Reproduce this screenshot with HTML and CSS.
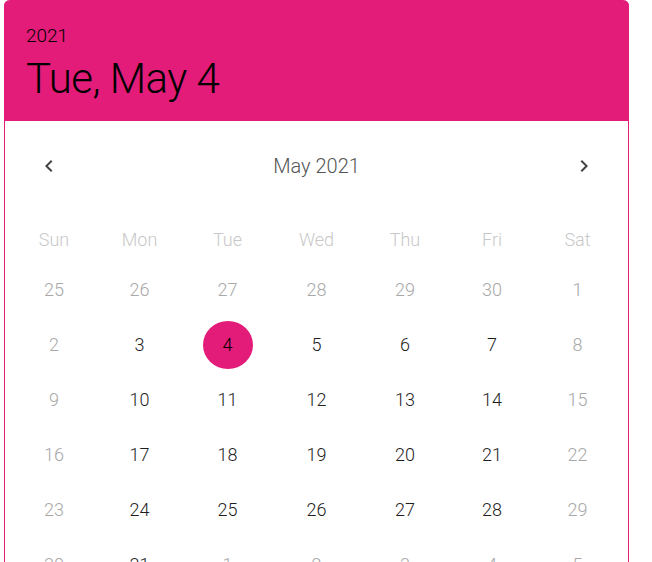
FILE: index.html
```html
<!DOCTYPE html>
<html lang="en">
<head>
    <meta charset="UTF-8">
    <meta name="viewport" content="width=device-width, initial-scale=1.0">
    <title>Date picker</title>
    <link rel="stylesheet" href="styles.css">
</head>
<body>
    <div class="picker">
        <div class="picker-header">
            <span class="picker-year">2021</span>
            <span class="picker-date">Tue, May 4</span>
        </div>

        <div class="month-nav">
            <button class="nav-btn" aria-label="Previous month">
                <svg viewBox="0 0 24 24" width="24" height="24"><path d="M15.41 7.41 14 6l-6 6 6 6 1.41-1.41L10.83 12z"/></svg>
            </button>
            <span class="month-label">May 2021</span>
            <button class="nav-btn" aria-label="Next month">
                <svg viewBox="0 0 24 24" width="24" height="24"><path d="M10 6 8.59 7.41 13.17 12l-4.58 4.59L10 18l6-6z"/></svg>
            </button>
        </div>

        <div class="week-row">
            <span>Sun</span><span>Mon</span><span>Tue</span><span>Wed</span><span>Thu</span><span>Fri</span><span>Sat</span>
        </div>

        <div class="days">
            <span class="day muted">25</span><span class="day muted">26</span><span class="day muted">27</span><span class="day muted">28</span><span class="day muted">29</span><span class="day muted">30</span><span class="day muted">1</span>
            <span class="day muted">2</span><span class="day">3</span><span class="day selected"><b>4</b></span><span class="day">5</span><span class="day">6</span><span class="day">7</span><span class="day muted">8</span>
            <span class="day muted">9</span><span class="day">10</span><span class="day">11</span><span class="day">12</span><span class="day">13</span><span class="day">14</span><span class="day muted">15</span>
            <span class="day muted">16</span><span class="day">17</span><span class="day">18</span><span class="day">19</span><span class="day">20</span><span class="day">21</span><span class="day muted">22</span>
            <span class="day muted">23</span><span class="day">24</span><span class="day">25</span><span class="day">26</span><span class="day">27</span><span class="day">28</span><span class="day muted">29</span>
            <span class="day muted">30</span><span class="day">31</span><span class="day muted">1</span><span class="day muted">2</span><span class="day muted">3</span><span class="day muted">4</span><span class="day muted">5</span>
        </div>
    </div>
</body>
</html>
```

FILE: styles.css
```css
* {
    box-sizing: border-box;
}

body {
    margin: 0;
    padding: 0 0 0 4px;
    font-family: Roboto, "Liberation Sans", sans-serif;
    background-color: #ffffff;
    height: 562px;
    overflow: hidden;
}

.picker {
    width: 625px;
    border: 1px solid #e31c79;
    border-top: none;
    border-radius: 6px 6px 0 0;
    background-color: #ffffff;
}

.picker-header {
    height: 121px;
    margin: 0 -1px;
    padding: 26px 22px 0;
    background-color: #e31c79;
    border-radius: 6px 6px 0 0;
    color: #000000;
    display: flex;
    flex-direction: column;
}

.picker-year {
    font-size: 19px;
    line-height: 20px;
    font-weight: 300;
}

.picker-date {
    margin-top: 9px;
    font-size: 42px;
    line-height: 48px;
    font-weight: 300;
    letter-spacing: -0.5px;
}

.month-nav {
    margin-top: 25px;
    height: 40px;
    padding: 0 30px;
    display: flex;
    align-items: center;
    justify-content: space-between;
}

.nav-btn {
    width: 28px;
    height: 28px;
    padding: 0;
    border: none;
    background: none;
    display: flex;
    align-items: center;
    justify-content: center;
    cursor: pointer;
}

.nav-btn svg {
    fill: #444444;
}

.month-label {
    font-size: 20px;
    font-weight: 300;
    color: #555555;
}

.week-row,
.days {
    display: grid;
    grid-template-columns: 84px 87px 89px 89px 88px 86px 85px;
    padding: 0 8px 0 7px;
}

.week-row {
    margin-top: 30px;
    height: 46px;
    align-items: center;
}

.week-row span {
    text-align: center;
    font-size: 18px;
    font-weight: 300;
    color: #c8c8c8;
}

.day {
    height: 55px;
    display: flex;
    align-items: center;
    justify-content: center;
    font-size: 18px;
    font-weight: 300;
    color: #1e1e1e;
}

.day.muted {
    color: #a8a8a8;
}

.day.selected b {
    width: 50px;
    height: 48px;
    border-radius: 50%;
    background-color: #e31c79;
    color: #000000;
    font-weight: 300;
    display: flex;
    align-items: center;
    justify-content: center;
}
```
